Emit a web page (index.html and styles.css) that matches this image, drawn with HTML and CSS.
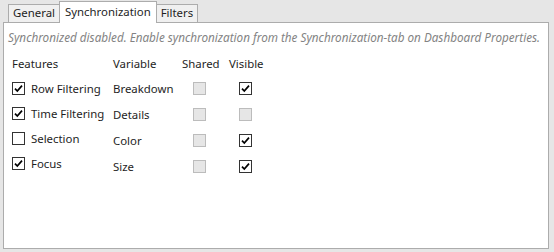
FILE: index.html
```html
<!DOCTYPE html>
<html lang="en">
<head>
<meta charset="UTF-8">
<title>Synchronization</title>
<link rel="stylesheet" href="styles.css">
</head>
<body>

<div class="tabs">
    <div class="tab">General</div>
    <div class="tab active">Synchronization</div>
    <div class="tab">Filters</div>
</div>

<div class="panel">
    <p class="hint">Synchronized disabled. Enable synchronization from the Synchronization-tab on Dashboard Properties.</p>

    <div class="sync">
        <div class="features">
            <div class="head">Features</div>
            <div class="feature"><span class="box checked"><svg viewBox="0 0 11 11"><path d="M2 5.6 L4.3 8 L9 2.6"/></svg></span>Row Filtering</div>
            <div class="feature"><span class="box checked"><svg viewBox="0 0 11 11"><path d="M2 5.6 L4.3 8 L9 2.6"/></svg></span>Time Filtering</div>
            <div class="feature"><span class="box"></span>Selection</div>
            <div class="feature"><span class="box checked"><svg viewBox="0 0 11 11"><path d="M2 5.6 L4.3 8 L9 2.6"/></svg></span>Focus</div>
        </div>

        <div class="vars">
            <div class="head">Variable</div>
            <div class="head">Shared</div>
            <div class="head">Visible</div>

            <div class="cell">Breakdown</div>
            <div class="cell"><span class="box disabled shared"></span></div>
            <div class="cell"><span class="box checked visible"><svg viewBox="0 0 11 11"><path d="M2 5.6 L4.3 8 L9 2.6"/></svg></span></div>

            <div class="cell">Details</div>
            <div class="cell"><span class="box disabled shared"></span></div>
            <div class="cell"><span class="box disabled visible"></span></div>

            <div class="cell">Color</div>
            <div class="cell"><span class="box disabled shared"></span></div>
            <div class="cell"><span class="box checked visible"><svg viewBox="0 0 11 11"><path d="M2 5.6 L4.3 8 L9 2.6"/></svg></span></div>

            <div class="cell">Size</div>
            <div class="cell"><span class="box disabled shared"></span></div>
            <div class="cell"><span class="box checked visible"><svg viewBox="0 0 11 11"><path d="M2 5.6 L4.3 8 L9 2.6"/></svg></span></div>
        </div>
    </div>
</div>

</body>
</html>
```

FILE: styles.css
```css
body {
    font-family: "Noto Sans", sans-serif;
    font-size: 11.4px;
    color: #1e1e1e;
    background-color: #e6e6e6;
    margin: 0;
    padding: 0;
    width: 554px;
    height: 252px;
    overflow: hidden;
}

.tabs {
    display: flex;
    align-items: flex-end;
    height: 22px;
    padding-left: 8px;
    position: relative;
    z-index: 1;
}

.tab {
    height: 17px;
    line-height: 16px;
    padding: 0 4px;
    background-color: #f0f0f0;
    border: 1px solid #acacac;
    border-bottom: none;
    margin-right: -1px;
}

.tab.active {
    height: 21px;
    line-height: 19px;
    padding: 0 5px;
    background-color: #fff;
    margin-bottom: -1px;
    position: relative;
}

.panel {
    margin-left: 3px;
    width: 544px;
    height: 225px;
    background-color: #fff;
    border: 1px solid #acacac;
}

.hint {
    margin: 0;
    padding: 6px 0 0 4px;
    height: 16px;
    line-height: 16px;
    font-size: 11.7px;
    font-style: italic;
    color: #838383;
    white-space: nowrap;
}

.sync {
    display: flex;
    padding: 11px 0 0 8px;
}

.features {
    width: 101px;
    display: flex;
    flex-direction: column;
}

.features .head {
    height: 20px;
    line-height: 16px;
}

.feature {
    display: flex;
    align-items: center;
    height: 25px;
    white-space: nowrap;
}

.feature .box {
    margin-right: 6px;
}

.vars {
    display: grid;
    grid-template-columns: 69px 47px 40px;
    grid-template-rows: 19px repeat(4, 26px);
}

.vars .head {
    line-height: 16px;
}

.cell {
    display: flex;
    align-items: center;
    padding-top: 1px;
}

.box {
    display: inline-block;
    box-sizing: border-box;
    width: 13px;
    height: 13px;
    border: 1px solid #333;
    background-color: #fff;
    flex-shrink: 0;
}

.box svg {
    display: block;
    width: 11px;
    height: 11px;
    fill: none;
    stroke: #000;
    stroke-width: 1.7;
}

.box.disabled {
    border-color: #bcbcbc;
    background-color: #e6e6e6;
}

.box.shared {
    margin-left: 11px;
    margin-top: -1px;
}

.box.visible {
    margin-left: 10px;
    margin-top: -1px;
}
```
